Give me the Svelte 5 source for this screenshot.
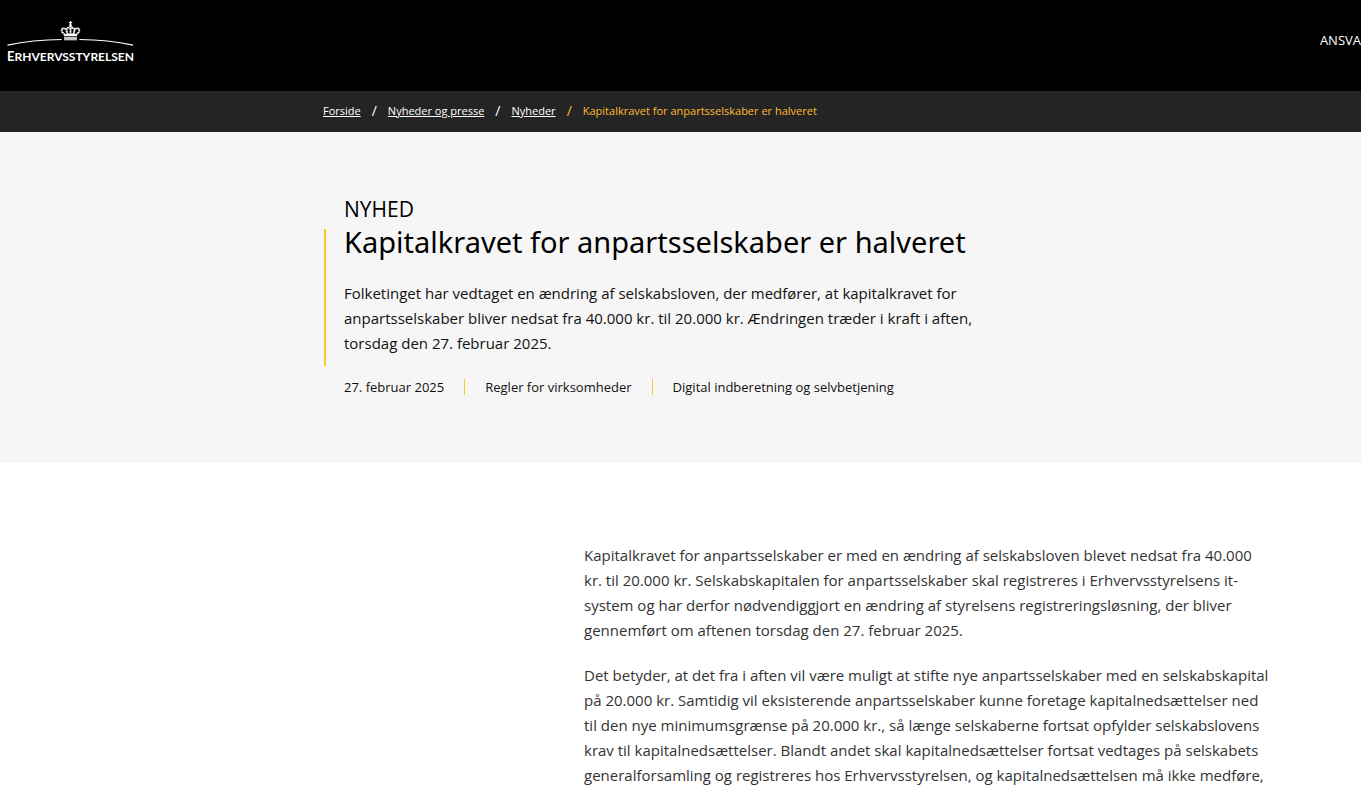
<script lang="ts">
	type Crumb = { label: string; href: string };

	const title = 'Kapitalkravet for anpartsselskaber er halveret';

	const crumbs: Crumb[] = [
		{ label: 'Forside', href: '#forside' },
		{ label: 'Nyheder og presse', href: '#nyheder-og-presse' },
		{ label: 'Nyheder', href: '#nyheder' }
	];

	const intro = [
		'Folketinget har vedtaget en ændring af selskabsloven, der medfører, at kapitalkravet for',
		'anpartsselskaber bliver nedsat fra 40.000 kr. til 20.000 kr. Ændringen træder i kraft i aften,',
		'torsdag den 27. februar 2025.'
	];

	const meta = ['27. februar 2025', 'Regler for virksomheder', 'Digital indberetning og selvbetjening'];

	const paragraphs = [
		[
			'Kapitalkravet for anpartsselskaber er med en ændring af selskabsloven blevet nedsat fra 40.000',
			'kr. til 20.000 kr. Selskabskapitalen for anpartsselskaber skal registreres i Erhvervsstyrelsens it-',
			'system og har derfor nødvendiggjort en ændring af styrelsens registreringsløsning, der bliver',
			'gennemført om aftenen torsdag den 27. februar 2025.'
		],
		[
			'Det betyder, at det fra i aften vil være muligt at stifte nye anpartsselskaber med en selskabskapital',
			'på 20.000 kr. Samtidig vil eksisterende anpartsselskaber kunne foretage kapitalnedsættelser ned',
			'til den nye minimumsgrænse på 20.000 kr., så længe selskaberne fortsat opfylder selskabslovens',
			'krav til kapitalnedsættelser. Blandt andet skal kapitalnedsættelser fortsat vedtages på selskabets',
			'generalforsamling og registreres hos Erhvervsstyrelsen, og kapitalnedsættelsen må ikke medføre,'
		]
	];
</script>

<header class="site-header">
	<a class="logo" href="#forside" aria-label="Erhvervsstyrelsen">
		<svg class="crown" viewBox="0 0 128 28" aria-hidden="true">
			<!-- Arc on either side of the crown -->
			<path d="M0.5 25.2Q26 20 55 19.6M73 19.6Q102 20 127 25.2" fill="none" stroke="#fff" stroke-width="1.1" />
			<!-- Crown -->
			<g fill="none" stroke="#fff" stroke-width="1.8">
				<path d="M64 1v5M62.3 2.6h3.4" stroke-width="1.2" />
				<path d="M58.6 15L55.6 12Q54.2 9 56.6 8.3Q58.8 8 59.8 10M69.4 15L72.4 12Q73.8 9 71.4 8.3Q69.2 8 68.2 10" stroke-dasharray="2 0.4" />
				<path d="M61.2 15L60 10.4Q60 7.8 62 7.6Q63.4 7.6 64 8.8Q64.6 7.6 66 7.6Q68 7.8 68 10.4L66.8 15M64 8.4V15" stroke-dasharray="2 0.4" />
			</g>
			<circle cx="64" cy="5.7" r="1.5" fill="#fff" />
			<path d="M57.4 14.4Q64 12.6 70.6 14.4V16.2H57.4z" fill="#fff" />
			<path d="M57.5 17h13v3.4h-13z" fill="#c4c4c4" />
		</svg>
		<span class="wordmark"><span class="initial">E</span>RHVERVSSTYRELSEN</span>
	</a>
	<nav aria-label="Hovedmenu">
		<a class="menu-link" href="#ansvar">ANSVA</a>
	</nav>
</header>

<nav class="breadcrumb" aria-label="Brødkrumme">
	<ol>
		{#each crumbs as crumb}
			<li><a href={crumb.href}>{crumb.label}</a></li>
		{/each}
		<li class="current" aria-current="page">{title}</li>
	</ol>
</nav>

<main>
	<section class="hero">
		<p class="kicker">NYHED</p>
		<div class="lead">
			<h1>{title}</h1>
			<p>
				{#each intro as line}{line}<br />{/each}
			</p>
		</div>
		<ul class="meta">
			{#each meta as item}
				<li>{item}</li>
			{/each}
		</ul>
	</section>

	<article>
		{#each paragraphs as lines}
			<p>
				{#each lines as line}{line}<br />{/each}
			</p>
		{/each}
	</article>
</main>

<style>
	:global(body) {
		font-family: 'Open Sans', 'Noto Sans', sans-serif;
		font-size: 15px;
		line-height: 25px;
		color: #111;
		background: #fff;
		overflow: hidden;
	}

	.site-header {
		display: flex;
		justify-content: space-between;
		align-items: flex-start;
		box-sizing: border-box;
		height: 91px;
		padding: 20px 0 0 7px;
		background: #000;
	}

	.logo {
		display: flex;
		flex-direction: column;
		align-items: center;
		width: 127px;
		color: #fff;
		text-decoration: none;
	}

	.crown {
		display: block;
		width: 100%;
		height: 28px;
	}

	.wordmark {
		font-family: Lato, sans-serif;
		font-size: 12px;
		font-weight: 700;
		line-height: 16px;
		white-space: nowrap;
	}

	.initial {
		font-size: 13px;
	}

	.menu-link {
		display: block;
		font-size: 13px;
		line-height: 40px;
		color: #fff;
		text-decoration: none;
	}

	.breadcrumb {
		padding: 0 0 0 323px;
		background: #242424;
	}

	.breadcrumb ol {
		display: flex;
		height: 41px;
		margin: 0;
		padding: 0;
		list-style: none;
		font-size: 11px;
		line-height: 40px;
		color: #fff;
		white-space: nowrap;
	}

	.breadcrumb li {
		display: flex;
	}

	.breadcrumb li + li::before {
		content: '/';
		margin: 0 11px;
		font-size: 14px;
	}

	.breadcrumb a {
		color: inherit;
		text-underline-offset: 1px;
	}

	.breadcrumb .current {
		color: #fdbb2f;
	}

	.hero {
		padding: 63px 20px 68px 324px;
		background: #f6f6f6;
	}

	.kicker {
		margin: 0;
		padding-left: 20px;
		font-size: 21px;
		line-height: 28px;
		color: #000;
	}

	.lead {
		margin-top: 6px;
		padding-left: 18px;
		border-left: 2px solid #f4cb2b;
		white-space: nowrap;
	}

	h1 {
		margin: 0;
		font-family: 'Noto Sans', sans-serif;
		font-size: 29px;
		font-weight: 400;
		line-height: 25px;
		color: #000;
	}

	.lead p {
		margin: 0;
		padding: 27px 0 10px;
	}

	.meta {
		display: flex;
		margin: 13px 0 0;
		padding: 0 0 0 20px;
		list-style: none;
		font-size: 13px;
		line-height: 16px;
		white-space: nowrap;
	}

	.meta li + li {
		margin-left: 20px;
		padding-left: 20px;
		border-left: 1px solid #f4cb2b;
	}

	article {
		padding: 80px 0 0 584px;
		color: #333;
		white-space: nowrap;
	}

	article p {
		margin: 0 0 20px;
	}
</style>
